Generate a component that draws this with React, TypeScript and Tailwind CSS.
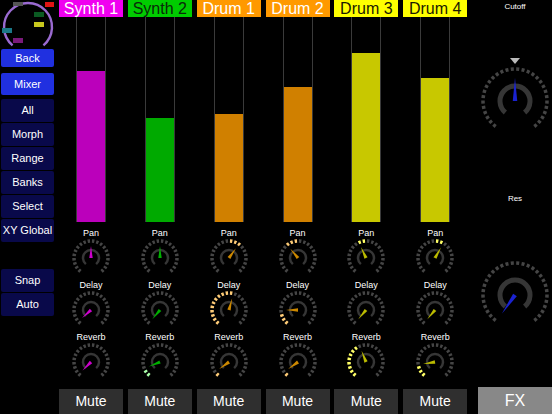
import React from "react";

// mixer page: 6 channels, left nav, filter knobs on the right

type Channel = {
  name: string;
  head: string;
  headText: string;
  fill: string;
  needle: string;
  lit: string;
  level: number; // fader fill in px (track is 204 tall)
  pan: [number, number, number]; // needle, litFrom, litTo
  delay: [number, number, number];
  reverb: [number, number, number];
};

const NONE = 999;

const channels: Channel[] = [
  {
    name: "Synth 1",
    head: "bg-[#f000f0]",
    headText: "text-white",
    fill: "bg-[#bb00bb]",
    needle: "#cc00cc",
    lit: "#ff88ff",
    level: 151,
    pan: [0, NONE, NONE],
    delay: [-132, NONE, NONE],
    reverb: [-135, NONE, NONE],
  },
  {
    name: "Synth 2",
    head: "bg-[#00cc00]",
    headText: "text-[#0a2a0a]",
    fill: "bg-[#00aa00]",
    needle: "#00b000",
    lit: "#aaffaa",
    level: 104,
    pan: [0, NONE, NONE],
    delay: [-140, NONE, NONE],
    reverb: [-112, -140, -118],
  },
  {
    name: "Drum 1",
    head: "bg-[#ff9900]",
    headText: "text-white",
    fill: "bg-[#d08000]",
    needle: "#cc8800",
    lit: "#ffcc77",
    level: 108,
    pan: [35, 0, 42],
    delay: [15, -140, 12],
    reverb: [-125, -140, -128],
  },
  {
    name: "Drum 2",
    head: "bg-[#ff9900]",
    headText: "text-white",
    fill: "bg-[#d08000]",
    needle: "#cc8800",
    lit: "#ffcc77",
    level: 135,
    pan: [-40, -42, 0],
    delay: [-90, -140, -95],
    reverb: [-125, -140, -132],
  },
  {
    name: "Drum 3",
    head: "bg-[#ffff00]",
    headText: "text-[#1a1a00]",
    fill: "bg-[#c8c800]",
    needle: "#bbbb00",
    lit: "#ffff66",
    level: 169,
    pan: [-25, -28, 0],
    delay: [-140, NONE, NONE],
    reverb: [-22, -140, -28],
  },
  {
    name: "Drum 4",
    head: "bg-[#ffff00]",
    headText: "text-[#1a1a00]",
    fill: "bg-[#c8c800]",
    needle: "#bbbb00",
    lit: "#ffff66",
    level: 144,
    pan: [30, 0, 30],
    delay: [-140, NONE, NONE],
    reverb: [-100, -140, -105],
  },
];

const navTop = ["All", "Morph", "Range", "Banks", "Select", "XY Global"];

// angle in degrees, clockwise from 12 o'clock
const pt = (cx: number, cy: number, r: number, a: number) => {
  const rad = (a * Math.PI) / 180;
  return [cx + r * Math.sin(rad), cy - r * Math.cos(rad)];
};

const arc = (cx: number, cy: number, r: number, a0: number, a1: number) => {
  const [x0, y0] = pt(cx, cy, r, a0);
  const [x1, y1] = pt(cx, cy, r, a1);
  const large = a1 - a0 > 180 ? 1 : 0;
  return `M${x0.toFixed(2)} ${y0.toFixed(2)} A${r} ${r} 0 ${large} 1 ${x1.toFixed(2)} ${y1.toFixed(2)}`;
};

type KnobProps = {
  size: number;
  ringR: number;
  ringW: number;
  segs: number;
  innerR: number;
  innerW: number;
  needleLen: number;
  needleW: number;
  value: number;
  litFrom?: number;
  litTo?: number;
  color: string;
  litColor?: string;
};

function Knob({
  size,
  ringR,
  ringW,
  segs,
  innerR,
  innerW,
  needleLen,
  needleW,
  value,
  litFrom = NONE,
  litTo = NONE,
  color,
  litColor = "#fff",
}: KnobProps) {
  const c = size / 2;
  const start = -145;
  const span = 290;
  const step = span / segs;
  const dashes = [];
  for (let i = 0; i < segs; i++) {
    const a0 = start + i * step + step * 0.22;
    const a1 = a0 + step * 0.56;
    const mid = (a0 + a1) / 2;
    const on = mid >= litFrom && mid <= litTo;
    dashes.push(
      <path
        key={i}
        d={arc(c, c, ringR, a0, a1)}
        stroke={on ? litColor : "#454545"}
        strokeWidth={ringW}
        fill="none"
      />
    );
  }
  const [tx, ty] = pt(c, c, needleLen, value);
  const [lx, ly] = pt(c, c, needleW / 2, value - 90);
  const [rx, ry] = pt(c, c, needleW / 2, value + 90);
  return (
    <svg width={size} height={size} viewBox={`0 0 ${size} ${size}`}>
      {dashes}
      <path d={arc(c, c, innerR, -140, 140)} stroke="#363636" strokeWidth={innerW} fill="none" />
      <polygon points={`${lx},${ly} ${tx},${ty} ${rx},${ry}`} fill={color} />
    </svg>
  );
}

function Logo() {
  return (
    <svg width="54" height="48" viewBox="0 0 54 48">
      <path d={arc(28, 27, 24, -140, 140)} stroke="#9a6ad0" strokeWidth="2.4" fill="none" />
      <rect x="13" y="2" width="10" height="4" fill="#555" />
      <rect x="45" y="2" width="11" height="5" fill="#e01515" />
      <rect x="34" y="12" width="10" height="5" fill="#0b5a22" />
      <rect x="34" y="22" width="10" height="5" fill="#c8c81e" />
      <rect x="2" y="28" width="10" height="5" fill="#1a7888" />
      <rect x="13" y="38" width="10" height="5" fill="#7a1a7a" />
    </svg>
  );
}

function NavButton({ label, active }: { label: string; active?: boolean }) {
  return (
    <div
      className={
        "flex items-center justify-center rounded-[2px] text-[11px] text-white " +
        (active ? "bg-[#2030e0]" : "bg-[#09094a]")
      }
    >
      {label}
    </div>
  );
}

function ChannelStrip({ ch }: { ch: Channel }) {
  const small = {
    size: 40,
    ringR: 17,
    ringW: 3.5,
    segs: 20,
    innerR: 8,
    innerW: 2.5,
    needleLen: 12,
    needleW: 3.4,
    color: ch.needle,
    litColor: ch.lit,
  };
  const knobs: [string, [number, number, number]][] = [
    ["Pan", ch.pan],
    ["Delay", ch.delay],
    ["Reverb", ch.reverb],
  ];
  return (
    <div className="flex w-[64px] flex-col items-center">
      <div className={`flex h-[17px] w-full items-center justify-center text-[16px] leading-none ${ch.head} ${ch.headText}`}>
        {ch.name}
      </div>
      {/* fader */}
      <div className="flex h-[205px] w-[30px] flex-col justify-end border-x border-[#3a3a3a]">
        <div className={ch.fill} style={{ height: ch.level }} />
      </div>
      <div className="mt-[6px] flex flex-col items-center gap-[2px]">
        {knobs.map(([label, v]) => (
          <div key={label} className="flex flex-col items-center">
            <div className="h-[10px] text-[9px] leading-[10px] text-white">{label}</div>
            <Knob {...small} value={v[0]} litFrom={v[1]} litTo={v[2]} />
          </div>
        ))}
      </div>
      <div className="mt-auto flex h-[25px] w-full items-center justify-center bg-[#2f2f2f] text-[14px] text-white">
        Mute
      </div>
    </div>
  );
}

export default function App() {
  const big = {
    size: 72,
    ringR: 32,
    ringW: 3.5,
    segs: 30,
    innerR: 15,
    innerW: 5,
    needleLen: 23,
    needleW: 4.5,
    color: "#1a22d0",
  };
  return (
    <div className="flex h-[414px] w-[552px] overflow-hidden bg-black font-['Liberation_Sans',Arial,sans-serif]">
      {/* left nav */}
      <div className="flex w-[59px] flex-col pr-[5px]">
        <Logo />
        <div className="ml-[1px] mt-[1px] grid h-[18px] grid-cols-1">
          <NavButton label="Back" active />
        </div>
        <div className="ml-[1px] mt-[6px] grid grid-cols-1 gap-[1px]">
          <div className="grid h-[22px]">
            <NavButton label="Mixer" active />
          </div>
          <div className="mt-[3px] grid auto-rows-[23px] gap-[1px]">
            {navTop.map((l) => (
              <NavButton key={l} label={l} />
            ))}
          </div>
        </div>
        <div className="ml-[1px] mt-[27px] grid auto-rows-[23px] gap-[1px]">
          <NavButton label="Snap" />
          <NavButton label="Auto" />
        </div>
      </div>

      {/* channels */}
      <div className="grid h-full w-[413px] grid-cols-6">
        {channels.map((ch) => (
          <ChannelStrip key={ch.name} ch={ch} />
        ))}
      </div>

      {/* filter */}
      <div className="flex flex-1 flex-col items-center pl-[6px]">
        <div className="mt-[1px] text-[8px] text-white">Cutoff</div>
        <div className="mt-[45px] h-0 w-0 border-x-[5px] border-t-[6px] border-x-transparent border-t-[#bbb]" />
        <div className="mt-[1px]">
          <Knob {...big} value={0} />
        </div>
        <div className="mt-[56px] text-[8px] text-white">Res</div>
        <div className="mt-[54px]">
          <Knob {...big} value={-145} />
        </div>
        <div className="mt-auto flex h-[27px] w-full items-center justify-center bg-[#888] text-[16px] text-white">
          FX
        </div>
      </div>
    </div>
  );
}
